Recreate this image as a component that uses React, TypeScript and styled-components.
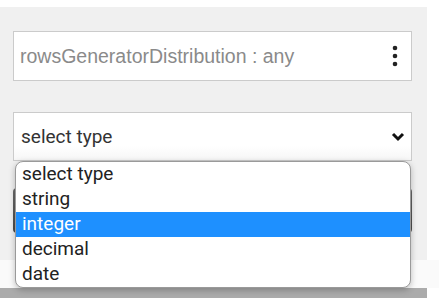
import * as React from 'react'
import styled, { createGlobalStyle } from 'styled-components'

const GlobalStyle = createGlobalStyle`
  body {
    margin: 0;
    background: #ffffff;
  }
`

const Page = styled.div`
  position: relative;
  width: 439px;
  height: 298px;
  overflow: hidden;
  background: #ffffff;
`

const Panel = styled.div`
  width: 427px;
  height: 253px;
  margin-top: 7px;
  box-sizing: border-box;
  padding: 24px 15px 0 13px;
  background: #f0f0f0;
  display: flex;
  flex-direction: column;
`

const FieldBox = styled.div`
  height: 50px;
  box-sizing: border-box;
  border: 1px solid #cbcbcb;
  background: #ffffff;
  display: flex;
  align-items: center;
  justify-content: space-between;
  padding: 0 13px 0 6px;
`

const FieldLabel = styled.span`
  font-family: "Liberation Sans", Arial, sans-serif;
  font-size: 19.5px;
  color: #8a8a8a;
`

const SelectBox = styled.div`
  margin-top: 31px;
  height: 49px;
  box-sizing: border-box;
  border: 1px solid #cbcbcb;
  background: linear-gradient(#ffffff 70%, #f6f6f6);
  display: flex;
  align-items: center;
  justify-content: space-between;
  padding: 0 6px 0 7px;
`

const SelectText = styled.span`
  font-family: Roboto, "Noto Sans", sans-serif;
  font-size: 19px;
  color: #333333;
`

const DarkButton = styled.div`
  margin-top: 27px;
  height: 45px;
  border-radius: 4px;
  background: linear-gradient(#6a6a6a, #4a4a4a);
`

const Footer = styled.div`
  height: 28px;
  background: #fafafa;
`

const BottomBar = styled.div`
  width: 427px;
  height: 10px;
  background: #ababab;
`

const Dropdown = styled.ul`
  position: absolute;
  top: 161px;
  left: 15px;
  width: 396px;
  height: 127px;
  box-sizing: border-box;
  margin: 0;
  padding: 0;
  list-style: none;
  background: #ffffff;
  border: 1px solid #9a9a9a;
  border-radius: 8px;
  overflow: hidden;
  box-shadow: 0 2px 6px rgba(0, 0, 0, 0.25);
`

const Option = styled.li<{ $active?: boolean }>`
  height: 25px;
  line-height: 24px;
  padding-left: 6px;
  font-family: Roboto, "Noto Sans", sans-serif;
  font-size: 19px;
  color: ${({ $active }) => ($active ? '#ffffff' : '#222222')};
  background: ${({ $active }) => ($active ? '#1e90ff' : 'transparent')};
`

const MoreIcon = () => (
  <svg width="6" height="22" viewBox="0 0 6 22">
    <circle cx="3" cy="3" r="2.3" fill="#222" />
    <circle cx="3" cy="11" r="2.3" fill="#222" />
    <circle cx="3" cy="19" r="2.3" fill="#222" />
  </svg>
)

const ChevronIcon = () => (
  <svg width="14" height="10" viewBox="0 0 14 10">
    <polyline points="2,2 7,7 12,2" fill="none" stroke="#111" strokeWidth="3" />
  </svg>
)

const options = ['select type', 'string', 'integer', 'decimal', 'date']

export default function App () {
  return (
    <Page>
      <GlobalStyle />
      <Panel>
        <FieldBox>
          <FieldLabel>rowsGeneratorDistribution : any</FieldLabel>
          <MoreIcon />
        </FieldBox>
        <SelectBox>
          <SelectText>select type</SelectText>
          <ChevronIcon />
        </SelectBox>
        <DarkButton />
      </Panel>
      <Footer />
      <BottomBar />
      <Dropdown>
        {options.map(o => (
          <Option key={o} $active={o === 'integer'}>{o}</Option>
        ))}
      </Dropdown>
    </Page>
  )
}
